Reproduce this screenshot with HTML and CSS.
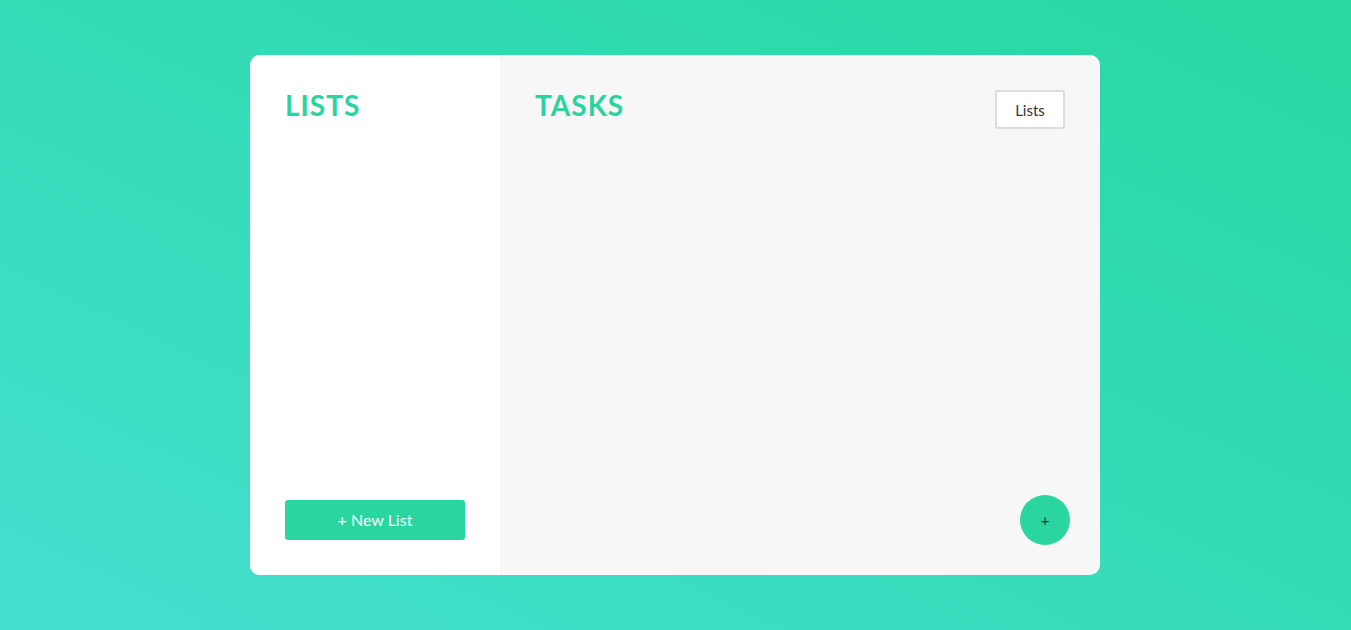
FILE: index.html
```html
<!DOCTYPE html>
<html>
<head>
<meta charset="utf-8">
<link rel="stylesheet" href="styles.css">
</head>
<body>
<div class="app">
  <aside class="lists">
    <h1 class="title">LISTS</h1>
    <button class="new-list">+ New List</button>
  </aside>
  <main class="tasks">
    <div class="tasks-head">
      <h1 class="title">TASKS</h1>
      <button class="lists-btn">Lists</button>
    </div>
    <button class="fab">+</button>
  </main>
</div>
</body>
</html>
```
FILE: styles.css
```css
html, body { margin: 0; height: 100%; }
body {
  background: linear-gradient(to top right, #44dfcf 0%, #27d7a0 100%);
  font-family: Lato, "Open Sans", sans-serif;
  padding-top: 55px;
  box-sizing: border-box;
}
.app {
  width: 850px;
  height: 520px;
  margin: 0 auto 0 250px;
  display: flex;
  border-radius: 10px;
  overflow: hidden;
  background: #f7f7f7;
}
.lists {
  width: 250px;
  background: #fff;
  box-sizing: border-box;
  padding: 34px 35px 35px;
  display: flex;
  flex-direction: column;
}
.title {
  margin: 0;
  font-size: 28px;
  line-height: 1.2;
  font-weight: 700;
  color: #2bd39f;
  letter-spacing: 1px;
}
.new-list {
  margin-top: auto;
  width: 180px;
  height: 40px;
  border: none;
  border-radius: 3px;
  background: #2ad5a0;
  color: #fff;
  font-family: Lato, sans-serif;
  font-size: 16px;
  padding-bottom: 3px;
  cursor: pointer;
}
.tasks {
  flex: 1;
  box-sizing: border-box;
  padding: 34px 30px 30px 35px;
  display: flex;
  flex-direction: column;
}
.tasks-head {
  display: flex;
  justify-content: space-between;
  align-items: flex-start;
  margin-right: 5px;
}
.lists-btn {
  margin-top: 1px;
  width: 70px;
  height: 39px;
  background: #fff;
  border: 2px solid #dcdcdc;
  border-radius: 3px;
  font-family: Lato, sans-serif;
  font-size: 15px;
  color: #333;
}
.fab {
  margin-top: auto;
  align-self: flex-end;
  width: 50px;
  height: 50px;
  border-radius: 50%;
  border: none;
  background: #2ad5a0;
  color: #1f3b33;
  font-size: 15px;
  font-family: Lato, sans-serif;
  padding: 0;
}
```
